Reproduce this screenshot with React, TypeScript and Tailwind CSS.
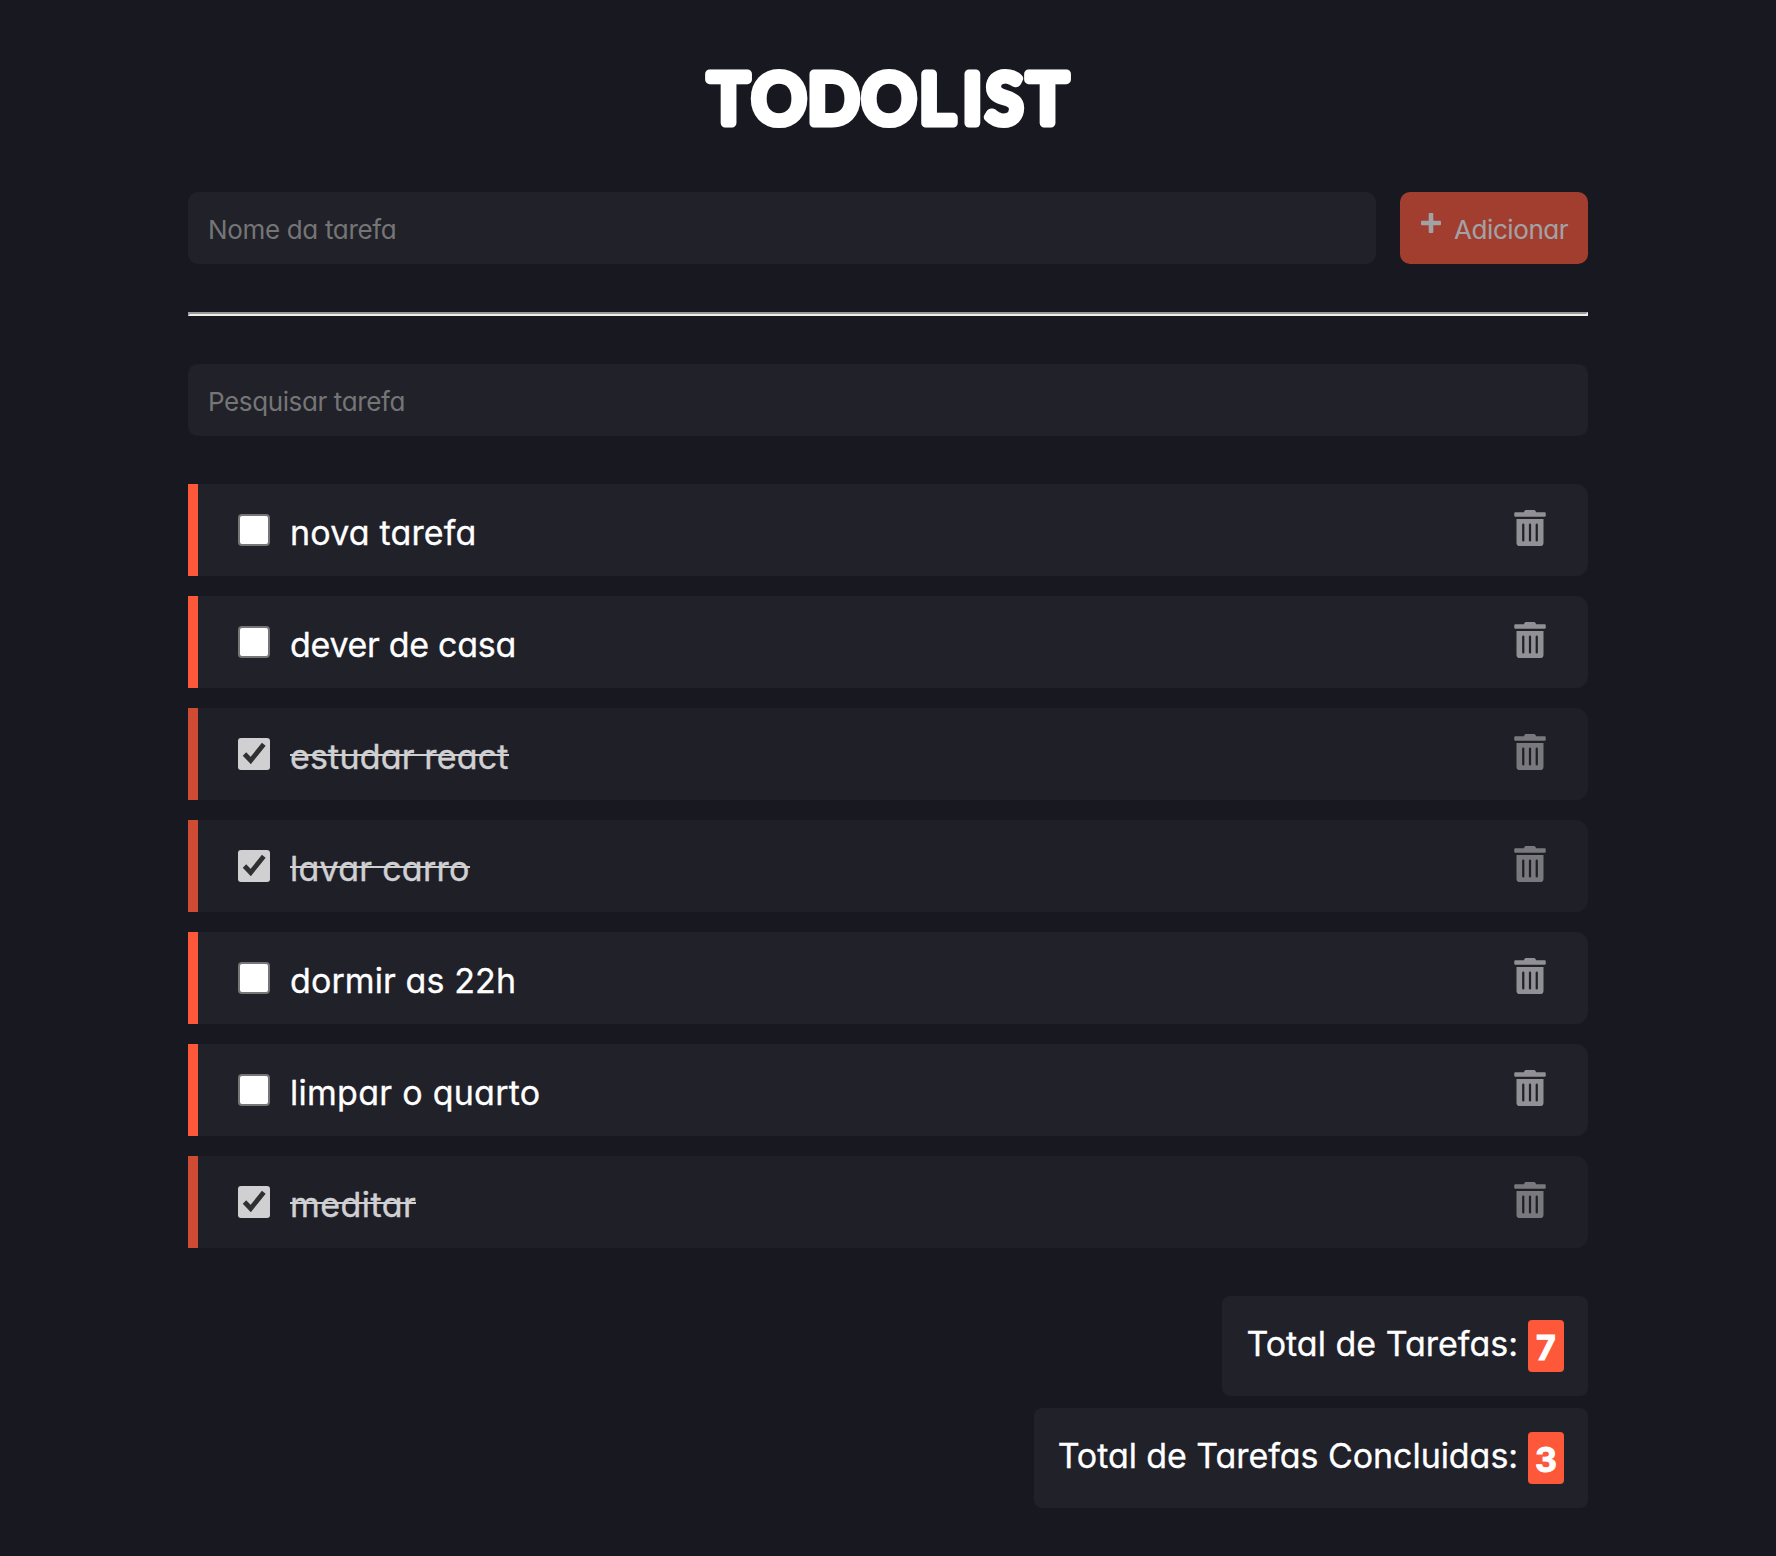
import React from "react";
import { FaTrashAlt } from "react-icons/fa";

type Task = { name: string; done: boolean; tracking: string };

const tasks: Task[] = [
  { name: "nova tarefa", done: false, tracking: "tracking-[0.17px]" },
  { name: "dever de casa", done: false, tracking: "tracking-[-0.3px]" },
  { name: "estudar react", done: true, tracking: "tracking-[0.17px]" },
  { name: "lavar carro", done: true, tracking: "tracking-[0.25px]" },
  { name: "dormir as 22h", done: false, tracking: "tracking-[0.1px]" },
  { name: "limpar o quarto", done: false, tracking: "tracking-[0.27px]" },
  { name: "meditar", done: true, tracking: "tracking-[0.45px]" },
];

function Checkbox({ checked }: { checked: boolean }) {
  return checked ? (
    <span className="block size-8 rounded-[3px] bg-white">
      <svg viewBox="0 0 32 32" className="size-8">
        <path d="M6.5 16 L12.7 22.5 L25.8 6.3" fill="none" stroke="#373737" strokeWidth="4.8" />
      </svg>
    </span>
  ) : (
    <span className="block size-8 rounded-[4px] border-2 border-[#767676] bg-white" />
  );
}

function Row({ task }: { task: Task }) {
  return (
    <li
      className={`flex h-[92px] items-center rounded-r-[12px] border-l-[10px] border-[#fd5839] bg-[#21212a] pr-10 pl-10 ${task.done ? "opacity-80" : ""}`}
    >
      <Checkbox checked={task.done} />
      <span
        className={`ml-5 whitespace-pre pt-[6px] text-[34px] leading-[44px] text-white [-webkit-text-stroke:0.3px_white] ${task.tracking} ${task.done ? "relative after:absolute after:inset-x-0 after:top-[25px] after:h-[2px] after:bg-white after:content-['']" : ""}`}
      >
        {task.name}
      </span>
      <FaTrashAlt className="mb-1 ml-auto size-9 text-white/50" />
    </li>
  );
}

function Total({ label, value, tracking }: { label: string; value: number; tracking: string }) {
  return (
    <div className="flex h-[100px] items-center rounded-lg bg-[#21212a] pr-6 pl-6 text-[34px] text-white">
      <span className={`whitespace-pre pb-[5px] [-webkit-text-stroke:0.3px_white] ${tracking}`}>{label}</span>
      <strong className="ml-[10px] flex h-[52px] w-9 items-center justify-center rounded-[4px] bg-[#fd5839] pt-[3px] font-bold [-webkit-text-stroke:1px_white]">
        {value}
      </strong>
    </div>
  );
}

export default function App() {
  return (
    <div className="min-h-[1556px] bg-[#181820] font-['Inter','Open_Sans',sans-serif] [font-feature-settings:'cv11']">
      <main className="mx-auto flex w-[1400px] flex-col pt-[52px]">
        <h1 className="flex h-[92px] items-center justify-center">
          <svg viewBox="0 0 400 92" className="h-[92px] w-[400px]" aria-label="TODOLIST">
            <text
              x="40.5 91 145.5 201 249 284.5 316.5 359.5"
              y="71"
              textAnchor="middle"
              fill="#ffffff"
              stroke="#ffffff"
              strokeWidth="9.2"
              strokeLinejoin="round"
              className="font-['Lato','Inter',sans-serif] text-[67px] font-normal"
            >
              TODOLIST
            </text>
          </svg>
        </h1>
        <div className="mt-12 flex gap-6">
          <div className="flex h-[72px] flex-1 items-center rounded-[10px] bg-[#21212a] px-5 pt-[2px] text-[26px] tracking-[-0.33px] text-[#757575]">
            <span>Nome da tarefa</span>
          </div>
          <button className="flex h-[72px] w-[188px] items-center rounded-[10px] bg-[#fd5839] pl-[21px] text-[26px] tracking-[-0.42px] text-white opacity-60">
            <svg viewBox="0 0 20 20" className="mb-[10px] size-5 shrink-0">
              <rect x="0" y="7.7" width="20" height="4.6" rx="1" fill="currentColor" />
              <rect x="7.7" y="0" width="4.6" height="20" rx="1" fill="currentColor" />
            </svg>
            <span className="ml-[13px] pt-[2px]">Adicionar</span>
          </button>
        </div>
        <hr className="mt-12 h-1 border-2 border-t-[#9a9a9a] border-r-[#eeeeee] border-b-[#eeeeee] border-l-[#9a9a9a]" />
        <div className="mt-12 flex h-[72px] items-center rounded-[10px] bg-[#21212a] px-5 pt-[2px] text-[26px] tracking-[-0.39px] text-[#757575]">
          <span>Pesquisar tarefa</span>
        </div>
        <ul className="mt-12 flex flex-col gap-5">
          {tasks.map((t) => (
            <Row key={t.name} task={t} />
          ))}
        </ul>
        <div className="mt-12 flex flex-col items-end gap-3">
          <Total label="Total de Tarefas:" value={7} tracking="tracking-[0px]" />
          <Total label="Total de Tarefas Concluidas:" value={3} tracking="tracking-[-0.06px]" />
        </div>
      </main>
    </div>
  );
}
